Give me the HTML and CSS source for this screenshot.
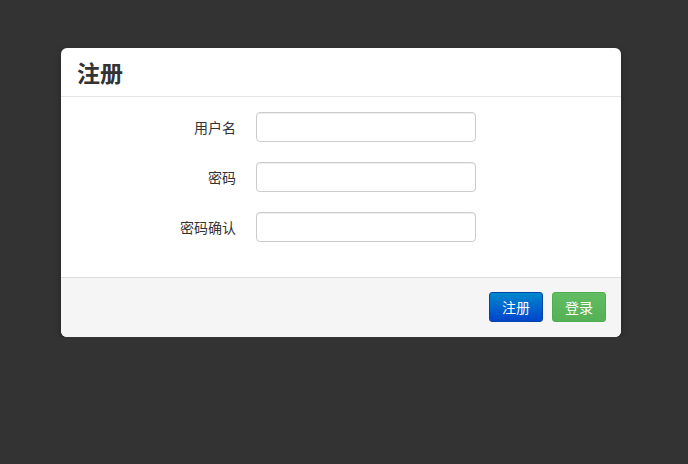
FILE: index.html
```html
<!DOCTYPE html>
<html>
<head>
<meta charset="utf-8">
<link rel="stylesheet" href="styles.css">
</head>
<body>
<div class="modal">
  <div class="modal-header"><h3 class="title">注册</h3></div>
  <div class="modal-body">
    <div class="row"><label class="label">用户名</label><input class="input" type="text"></div>
    <div class="row"><label class="label">密码</label><input class="input" type="password"></div>
    <div class="row"><label class="label">密码确认</label><input class="input" type="password"></div>
  </div>
  <div class="modal-footer">
    <button class="btn btn-primary">注册</button>
    <button class="btn btn-success">登录</button>
  </div>
</div>
</body>
</html>
```
FILE: styles.css
```css
html, body {
  margin: 0;
  padding: 0;
  background: #333333;
  font-family: "Noto Sans CJK SC", "Liberation Sans", sans-serif;
}
body {
  padding: 48px 0 0 61px;
}
.modal {
  width: 560px;
  background: #fff;
  border-radius: 6px;
  box-shadow: 0 3px 7px rgba(0,0,0,0.3);
}
.modal-header {
  height: 49px;
  box-sizing: border-box;
  border-bottom: 1px solid #e5e5e5;
  padding: 0 16px;
  display: flex;
  align-items: center;
}
.title {
  margin: 0;
  font-size: 23px;
  font-weight: bold;
  color: #333;
  line-height: 1;
}
.modal-body {
  padding: 15px 0 35px 0;
  display: flex;
  flex-direction: column;
  gap: 20px;
}
.row {
  display: grid;
  grid-template-columns: 175px 220px;
  column-gap: 20px;
  align-items: center;
}
.label {
  text-align: right;
  font-size: 14px;
  color: #333;
}
.input {
  width: 220px;
  height: 30px;
  box-sizing: border-box;
  border: 1px solid #cccccc;
  border-radius: 4px;
  box-shadow: inset 0 1px 1px rgba(0,0,0,0.075);
  margin: 0;
  padding: 4px 6px;
  background: #fff;
}
.modal-footer {
  border-top: 1px solid #dddddd;
  background: #f5f5f5;
  border-radius: 0 0 6px 6px;
  padding: 14px 15px 15px;
  display: flex;
  justify-content: flex-end;
  gap: 9px;
}
.btn {
  width: 54px;
  height: 30px;
  box-sizing: border-box;
  border-radius: 3px;
  color: #fff;
  font-size: 14px;
  font-family: "Noto Sans CJK SC", "Liberation Sans", sans-serif;
  padding: 0;
  cursor: pointer;
}
.btn-primary {
  background: linear-gradient(to bottom, #0088cc, #0044cc);
  border: 1px solid #0044aa;
}
.btn-success {
  background: linear-gradient(to bottom, #62bd62, #56b056);
  border: 1px solid #4cae4c;
}
```
